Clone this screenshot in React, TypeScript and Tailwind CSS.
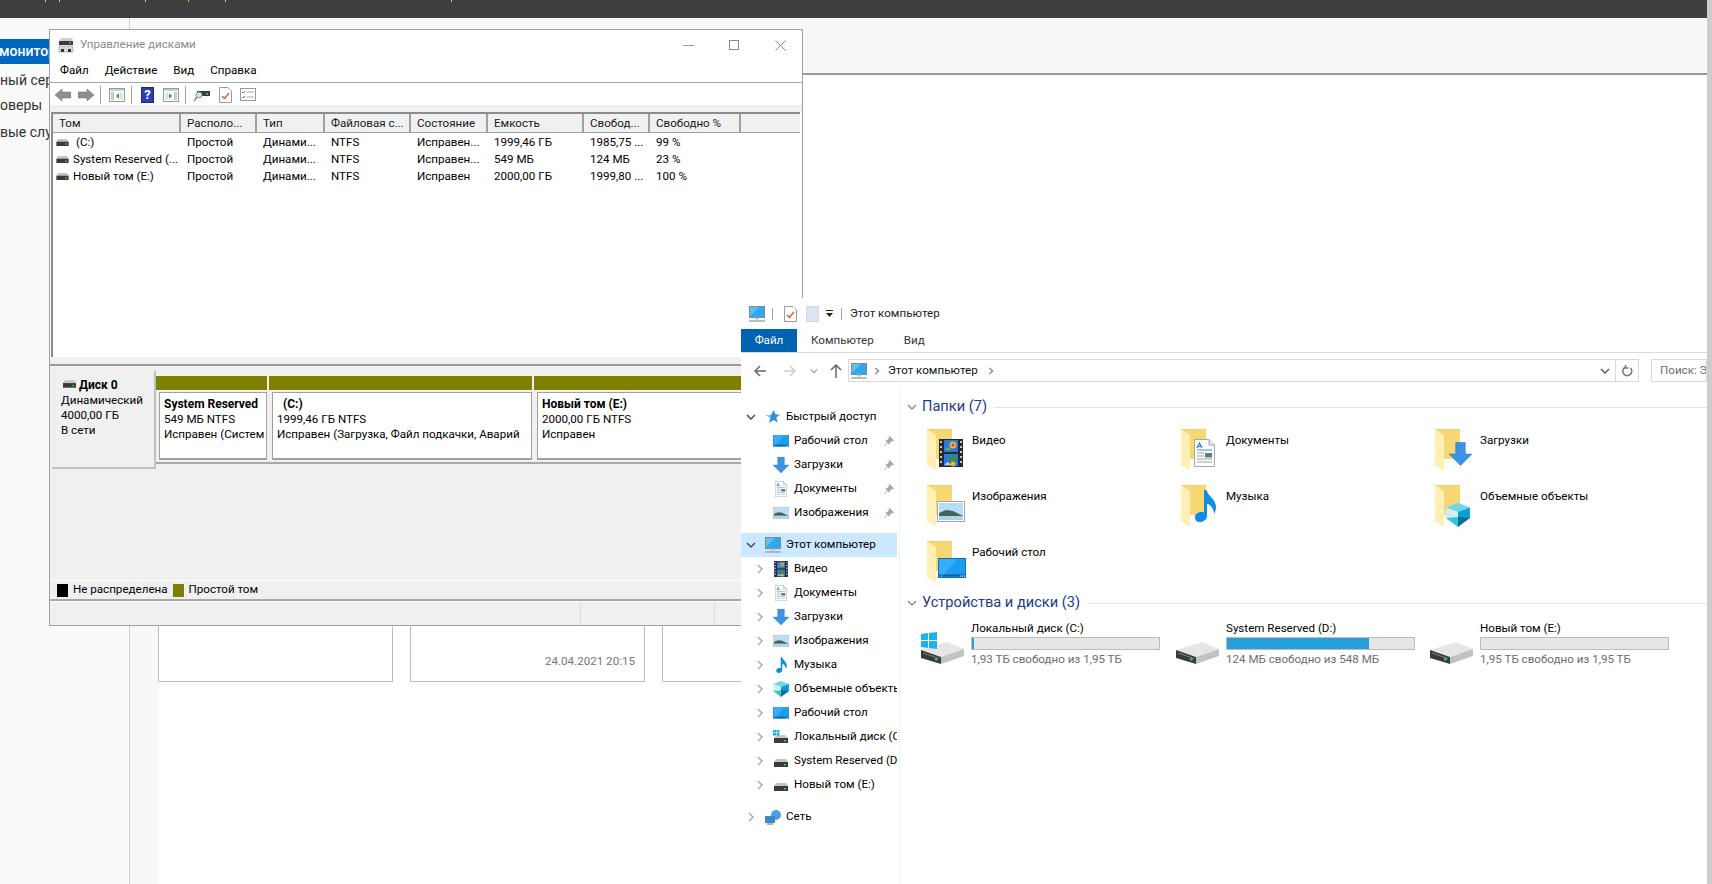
import { ReactNode } from "react";

const Chevron = ({ open, className }: { open?: boolean; className?: string }) => (
  <svg viewBox="0 0 10 10" className={className} fill="none" strokeWidth="1.4">
    {open ? <path d="M1 3l4 4 4-4" /> : <path d="M3 1l4 4-4 4" />}
  </svg>
);

const Pc = ({ className }: { className?: string }) => (
  <svg viewBox="0 0 16 16" className={className}>
    <rect x="0.500" y="0.500" width="15" height="11" fill="#1f9ce8" stroke="#7a8a96" strokeWidth="1" />
    <path d="M1 1h14v9.500H1z" fill="#5cc0f2" />
    <path d="M1 10L10 1h5v9.500H1z" fill="#2ea8ee" />
    <path d="M0 15h16" stroke="#9aa5ad" strokeWidth="1.400" />
    <path d="M6 12.500h4" stroke="#b7bfc5" strokeWidth="2" />
  </svg>
);

const Star = ({ className }: { className?: string }) => (
  <svg viewBox="0 0 14 14" className={className}>
    <path d="M8 0l1.500 4.500H14L10.300 7.500l1.500 5L7.500 10 3 13l1.400-5L0 5h5z" fill="#2f8fe0" />
    <path d="M3 13l1.400-5L0 5h5z" fill="#86c4f2" />
  </svg>
);

const Pin = () => (
  <svg viewBox="0 0 10 10" className="w-[10px] h-[10px] shrink-0 mr-[3px]">
    <path d="M5.500 0L10 4.500 8.800 5.500 7.800 5 5.500 7.500 5.500 9 1 4.500 2.500 4.500 5 2 4.500 1z" fill="#a8a8a8" />
    <path d="M3 7L0.500 9.500" stroke="#a8a8a8" />
  </svg>
);

const DesktopIcon = ({ className }: { className?: string }) => (
  <svg viewBox="0 0 28 20" className={className}>
    <rect x="0.500" y="0.500" width="27" height="19" fill="#1a9cf0" stroke="#1071b5" />
    <path d="M1 1h18L6 17H1z" fill="#35aef5" />
    <path d="M1 17.500h26" stroke="#0a5f9c" strokeWidth="2" />
    <path d="M3 18h1M22 18h1M24 18h1M26 18h1" stroke="#fff" />
  </svg>
);

const DownArrow = ({ className }: { className?: string }) => (
  <svg viewBox="0 0 24 24" className={className}>
    <path d="M7 0h10v12h7L12 24 0 12h7z" fill="#3c93e4" stroke="#2a6fb5" strokeWidth="0.500" />
  </svg>
);

const DocIcon = ({ className }: { className?: string }) => (
  <svg viewBox="0 0 21 28" className={className}>
    <path d="M0.500 0.500H15L20.500 6V27.500H0.500z" fill="#fff" stroke="#a8a8a8" />
    <path d="M15 0.500V6h5.500" fill="#e8e8e8" stroke="#a8a8a8" />
    <path d="M3 9l2.500-5L8 9M4 7.500h3" fill="none" stroke="#2a7fd0" strokeWidth="1.200" />
    <path d="M3 11h15" stroke="#2a9ce0" strokeWidth="1" />
    <path d="M3 14h7M3 17h7M3 20h15M3 23h15" stroke="#9aa0a6" />
    <rect x="11" y="14" width="7" height="4.500" fill="#5d7f8a" />
  </svg>
);

const ImageIcon = ({ className }: { className?: string }) => (
  <svg viewBox="0 0 28 21" className={className}>
    <rect x="0.500" y="0.500" width="27" height="20" fill="#fff" stroke="#a5a5a5" />
    <rect x="2" y="2" width="24" height="17" fill="#b7dcf3" />
    <path d="M2 12l7-3 7 1 10 5v2H2z" fill="#40645c" />
    <rect x="2" y="15" width="24" height="4" fill="#a9d3e6" />
  </svg>
);

const FilmIcon = ({ className }: { className?: string }) => (
  <svg viewBox="0 0 24 28" className={className}>
    <rect width="24" height="28" fill="#26292c" />
    <path d="M1 2h2v2H1zM1 7h2v2H1zM1 12h2v2H1zM1 17h2v2H1zM1 22h2v2H1zM21 2h2v2h-2zM21 7h2v2h-2zM21 12h2v2h-2zM21 17h2v2h-2zM21 22h2v2h-2z" fill="#c8c8c8" />
    <rect x="5" y="1" width="14" height="12" fill="#2a78e0" />
    <rect x="5" y="15" width="14" height="12" fill="#2a78e0" />
    <circle cx="14" cy="6" r="3.500" fill="#e9b53a" />
    <circle cx="14" cy="6" r="1.500" fill="#d8452e" />
    <path d="M6 10l3-2 3 3H6z" fill="#63b04a" />
    <circle cx="14" cy="20" r="3.500" fill="#3a8f3c" />
    <circle cx="14" cy="25" r="2.500" fill="#e9b53a" />
    <path d="M6 25l3-2 3 3H6z" fill="#e9d46a" />
  </svg>
);

const MusicIcon = ({ className }: { className?: string }) => (
  <svg viewBox="0 0 21 32" className={className}>
    <path d="M9 0h2.500c.5 5 9.500 9 9.500 17 0 3-1 5-2 7 0-5-3-9-7-10.500V26c0 3.500-3.500 6-7 6S0 30 0 27s4-6 9-4.500z" fill="#0b8ee8" />
  </svg>
);

const CubeIcon = ({ className }: { className?: string }) => (
  <svg viewBox="0 0 24 24" className={className}>
    <path d="M12 0L0 4.500 12 9l12-4.500z" fill="#6dd6e8" />
    <path d="M0 4.500V15l12 4V9z" fill="#d3eef3" />
    <path d="M24 4.500V15l-12 4V9z" fill="#0a9fd0" />
    <path d="M0 15l12 9V14z" fill="#35c4d8" />
    <path d="M24 15l-12 9V14z" fill="#0a6f90" />
  </svg>
);

const Folder = ({ children }: { children?: ReactNode }) => (
  <div className="relative w-[40px] h-[42px] shrink-0">
    <svg viewBox="0 0 26 42" className="absolute left-0 top-0 w-[26px] h-[42px]">
      <path d="M0 0h25v30H9v11L0 36z" fill="#f8d775" />
      <path d="M0 0l9 6v35l-9-5z" fill="#fff0b5" />
      <path d="M0 0h25v1H0z" fill="#f3cf6b" />
    </svg>
    {children}
  </div>
);

const DriveLarge = ({ win, className }: { win?: boolean; className?: string }) => (
  <svg viewBox="0 0 44 32" className={className}>
    <path d="M0 18L26 10l17 7-23 8z" fill="#e6e6e6" />
    <path d="M20 25l23-8v7l-23 8z" fill="#c2c2c2" />
    <path d="M0 18l20 7v7L0 26z" fill="#3a3a3a" />
    <path d="M2 21l16 5.500" stroke="#808080" strokeWidth="1" />
    <rect x="14" y="26" width="2.500" height="2.500" fill="#35c94a" />
    {win && <path d="M0 2l7-1v7H0zM8 1l8-1v8H8zM0 9h7v7l-7-1zM8 9h8v8l-8-1z" fill="#19b4ee" />}
  </svg>
);

const DriveSmall = ({ win, className }: { win?: boolean; className?: string }) => (
  <svg viewBox="0 0 16 14" className={className}>
    <path d="M1 8l3-3h8l3 3z" fill="#c9c9c9" />
    <rect x="1" y="8" width="14" height="5" fill="#3c3c3c" />
    <rect x="11" y="10" width="2" height="1.500" fill="#39d353" />
    {win && <path d="M0 0h3v2.500H0zM3.500 0h3v2.500h-3zM0 3h3v2.500H0zM3.500 3h3v2.500h-3z" fill="#19b4ee" />}
  </svg>
);

const DiskMiniGray = ({ className }: { className?: string }) => (
  <svg viewBox="0 0 14 8" className={className}>
    <path d="M0 3l2-3h10l2 3z" fill="#c4c4c4" />
    <rect y="3" width="14" height="5" fill="#3a3a3a" />
    <rect x="10" y="5" width="2" height="1.500" fill="#39d353" />
  </svg>
);

// панель инструментов "Управление дисками"
const ToolSep = ({ className }: { className?: string }) => <div className={`w-px h-[18px] bg-[#a0a0a0] ${className ?? ""}`} />;

const PanelIcon = ({ side }: { side: "left" | "right" }) => (
  <svg viewBox="0 0 16 14" className="w-4 h-[14px] shrink-0">
    <rect x="0.500" y="0.500" width="15" height="13" fill="#fff" stroke="#8f9aa3" />
    <path d="M1 1h14v2H1z" fill="#c8d0d6" />
    {side === "left" ? (
      <>
        <path d="M2 5h3M2 7h3M2 9h3M2 11h3" stroke="#7fa06e" />
        <path d="M10 5v6L7 8z" fill="#2fa33a" />
        <path d="M11 5h3v7h-3z" fill="#dfe5ea" />
      </>
    ) : (
      <>
        <path d="M11 5h3M11 7h3M11 9h3M11 11h3" stroke="#8f9aa3" />
        <path d="M6 5v6l3-3z" fill="#2fa33a" />
        <path d="M2 5h3v7H2z" fill="#dfe5ea" />
      </>
    )}
  </svg>
);

const DiskToolbar = () => (
  <div className="h-[22px] pt-px flex items-center pl-[5px] shrink-0">
    <svg viewBox="0 0 16 12" className="w-4 h-3 shrink-0">
      <path d="M7 0v3h9v6H7v3L0 6z" fill="#8f8f8f" stroke="#6f6f6f" strokeWidth="0.500" />
    </svg>
    <svg viewBox="0 0 16 12" className="w-4 h-3 shrink-0 ml-[7px]">
      <path d="M9 0v3H0v6h9v3l7-6z" fill="#8f8f8f" stroke="#6f6f6f" strokeWidth="0.500" />
    </svg>
    <ToolSep className="ml-[6px]" />
    <div className="ml-[8px]">
      <PanelIcon side="left" />
    </div>
    <ToolSep className="ml-[6px]" />
    <div className="ml-[9px] w-[13px] h-[16px] bg-[#2b3fb5] border border-[#1c2a85] text-white text-[13px] leading-[14px] font-bold text-center">?</div>
    <div className="ml-[9px]">
      <PanelIcon side="right" />
    </div>
    <ToolSep className="ml-[6px]" />
    <svg viewBox="0 0 16 14" className="w-4 h-[14px] ml-[8px] shrink-0">
      <path d="M3 3h13v5H3z" fill="#3a3a3a" />
      <rect x="12" y="5" width="2" height="1.500" fill="#39d353" />
      <circle cx="5" cy="7" r="3" fill="#cfe4ef" stroke="#7d8c95" />
      <path d="M3 9l-3 4" stroke="#7d8c95" strokeWidth="1.500" />
    </svg>
    <svg viewBox="0 0 13 16" className="w-[13px] h-4 ml-[9px] shrink-0">
      <path d="M0.500 0.500H9L12.500 4v11.500H0.500z" fill="#fff" stroke="#9a9a9a" />
      <path d="M3 9l2.500 2.500L10 6" fill="none" stroke="#e2572b" strokeWidth="1.400" />
    </svg>
    <svg viewBox="0 0 16 13" className="w-4 h-[13px] ml-[8px] shrink-0">
      <rect x="0.500" y="0.500" width="15" height="12" fill="#fff" stroke="#8f9aa3" />
      <path d="M2 4l1 1 2-2M2 9l1 1 2-2" fill="none" stroke="#2f7fd0" />
      <path d="M7 4h7M7 9h7" stroke="#a3adb5" />
    </svg>
  </div>
);

const listCols = "grid grid-cols-[128px_76px_68px_86px_77px_96px_66px_91px_1fr]";

const heads = ["Том", "Располо...", "Тип", "Файловая с...", "Состояние", "Емкость", "Свобод...", "Свободно %", ""];

const rows = [
  { name: "(C:)", gap: "ml-[7px]", cells: ["Простой", "Динами...", "NTFS", "Исправен...", "1999,46 ГБ", "1985,75 ...", "99 %"] },
  { name: "System Reserved (...", gap: "ml-[4px]", cells: ["Простой", "Динами...", "NTFS", "Исправен...", "549 МБ", "124 МБ", "23 %"] },
  { name: "Новый том (E:)", gap: "ml-[4px]", cells: ["Простой", "Динами...", "NTFS", "Исправен", "2000,00 ГБ", "1999,80 ...", "100 %"] },
];

const VolumeList = () => (
  <div className="h-[245px] ml-px mr-[2px] border-l-2 border-t-2 border-[#8c8c8c] bg-white flex flex-col shrink-0">
    <div className={`${listCols} h-[19px] bg-[#f0f0f0] border-b border-[#a0a0a0]`}>
      {heads.map((h, i) => (
        <div key={i} className="pl-[6px] border-r-2 border-[#a0a0a0] last:border-r-0 leading-[18px] whitespace-nowrap overflow-hidden text-[#1a1a1a]">
          {h}
        </div>
      ))}
    </div>
    <div className="pt-px">
      {rows.map((r) => (
        <div key={r.name} className={`${listCols} h-[17px] leading-[17px]`}>
          <div className="flex items-center pl-[3px] whitespace-nowrap overflow-hidden">
            <DiskMiniGray className="w-[13px] h-[7px] shrink-0" />
            <span className={r.gap}>{r.name}</span>
          </div>
          {r.cells.map((c, i) => (
            <div key={i} className="pl-[6px] whitespace-nowrap">
              {c}
            </div>
          ))}
        </div>
      ))}
    </div>
  </div>
);

const Partition = ({ w, title, size, status, indent }: { w: string; title: string; size: string; status: string; indent?: boolean }) => (
  <div className={`${w} shrink-0 pr-[2px] pt-[5px] h-[93px] border-b-2 border-[#a8a8a8]`}>
    <div className="h-[14px] bg-[#808000]" />
    <div className="mt-[2px] ml-[3px] h-[68px] bg-white border border-[#a0a0a0] border-b-2 pl-[4px] pt-[4px] leading-[15px] whitespace-nowrap overflow-hidden">
      <div className={`font-bold text-[12px] ${indent ? "pl-[6px]" : ""}`}>{title}</div>
      <div>{size}</div>
      <div>{status}</div>
    </div>
  </div>
);

const DiskWindow = () => (
  <div className="absolute left-[49px] top-[29px] w-[754px] h-[597px] bg-white border border-[#a0a0a0] flex flex-col">
    <div className="h-[30px] flex items-center pl-[8px] shrink-0">
      <svg viewBox="0 0 16 16" className="w-4 h-4 shrink-0">
        <path d="M3 1h12l-2 4H1z" fill="#cfcfcf" />
        <rect x="1" y="4" width="14" height="4" fill="#3a3a3a" />
        <rect x="11" y="5" width="2" height="1.500" fill="#39d353" />
        <rect x="1" y="9" width="14" height="6" fill="#d8d8d8" stroke="#8c8c8c" strokeWidth="0.500" />
        <rect x="3" y="12" width="3" height="3" fill="#333" />
        <rect x="10" y="12" width="3" height="3" fill="#333" />
      </svg>
      <span className="ml-[6px] text-[#8a8a8a]">Управление дисками</span>
      <div className="ml-auto flex items-center text-[#8a8a8a]">
        <div className="w-[11px] h-px bg-[#9a9a9a] mr-[35px]" />
        <div className="w-[10px] h-[10px] border border-[#8a8a8a] mr-[36px]" />
        <svg viewBox="0 0 11 11" className="w-[11px] h-[11px] mr-[16px]">
          <path d="M0.500 0.500l10 10M10.500 0.500l-10 10" stroke="#8a8a8a" />
        </svg>
      </div>
    </div>
    <div className="h-[23px] flex items-center border-b border-[#a8a8a8] pl-[10px] gap-[16px] shrink-0">
      <span>Файл</span>
      <span>Действие</span>
      <span>Вид</span>
      <span>Справка</span>
    </div>
    <DiskToolbar />
    <div className="h-[7px] bg-[#f0f0f0] shrink-0" />
    <VolumeList />
    <div className="h-[7px] bg-[#f0f0f0] shrink-0" />
    <div className="h-[2px] bg-[#9a9a9a] shrink-0" />
    <div className="flex-1 bg-[#f0f0f0] flex flex-col min-h-0">
      <div className="flex-1 pt-[5px] pl-[2px]">
        <div className="flex">
          <div className="w-[104px] h-[98px] bg-[#f0f0f0] border-r-2 border-b-2 border-[#c0c0c0] pl-[9px] pt-[7px] leading-[15px] shrink-0">
            <div className="flex items-center h-[15px] font-bold text-[12px]">
              <DiskMiniGray className="w-[13px] h-[8px] ml-[2px] mr-[3px] -mt-[3px]" />
              Диск 0
            </div>
            <div>Динамический</div>
            <div>4000,00 ГБ</div>
            <div>В сети</div>
          </div>
          <Partition w="w-[113px]" title="System Reserved" size="549 МБ NTFS" status="Исправен (Систем" />
          <Partition w="w-[265px]" title="(C:)" size="1999,46 ГБ NTFS" status="Исправен (Загрузка, Файл подкачки, Аварий" indent />
          <Partition w="w-[264px]" title="Новый том  (E:)" size="2000,00 ГБ NTFS" status="Исправен" />
        </div>
      </div>
      <div className="h-[19px] border-t border-white flex items-center pl-[7px] shrink-0">
        <div className="w-[11px] h-[13px] bg-black" />
        <span className="ml-[5px]">Не распределена</span>
        <div className="ml-[5px] w-[11px] h-[13px] bg-[#808000]" />
        <span className="ml-[5px]">Простой том</span>
      </div>
    </div>
    <div className="h-[2px] bg-[#a8a8a8] shrink-0" />
    <div className="h-[24px] bg-[#f0f0f0] border-t border-white flex shrink-0">
      <div className="w-[531px] border-r border-[#dcdcdc]" />
      <div className="w-[134px] border-r border-[#dcdcdc]" />
    </div>
  </div>
);

const NavRow = ({ level, icon, label, pin, chev, open, active }: { level: 1 | 2; icon: ReactNode; label: string; pin?: boolean; chev?: boolean; open?: boolean; active?: boolean }) => (
  <div className={`h-6 flex items-center w-[156px] ${active ? "bg-[#cce8ff]" : ""}`}>
    <div className={`${level === 1 ? "w-[24px] pl-[5px]" : "w-[32px] pl-[14px]"} shrink-0`}>
      {chev && <Chevron open={open} className={`w-[10px] h-[10px] ${open ? "stroke-[#444]" : "stroke-[#a6a6a6]"}`} />}
    </div>
    <div className="w-[16px] h-[16px] shrink-0 flex items-center justify-center">{icon}</div>
    <span className="ml-[5px] flex-1 overflow-hidden whitespace-nowrap">{label}</span>
    {pin && <Pin />}
  </div>
);

const NavPane = () => (
  <div className="w-[159px] border-r border-[#f0f0f0] pt-[18px] shrink-0 flex flex-col">
    <NavRow level={1} chev open icon={<Star className="w-[14px] h-[14px]" />} label="Быстрый доступ" />
    <NavRow level={2} pin icon={<DesktopIcon className="w-4 h-3" />} label="Рабочий стол" />
    <NavRow level={2} pin icon={<DownArrow className="w-4 h-4" />} label="Загрузки" />
    <NavRow level={2} pin icon={<DocIcon className="w-3 h-4" />} label="Документы" />
    <NavRow level={2} pin icon={<ImageIcon className="w-4 h-3" />} label="Изображения" />
    <div className="h-2" />
    <NavRow level={1} chev open active icon={<Pc className="w-4 h-4" />} label="Этот компьютер" />
    <NavRow level={2} chev icon={<FilmIcon className="w-[14px] h-4" />} label="Видео" />
    <NavRow level={2} chev icon={<DocIcon className="w-3 h-4" />} label="Документы" />
    <NavRow level={2} chev icon={<DownArrow className="w-4 h-4" />} label="Загрузки" />
    <NavRow level={2} chev icon={<ImageIcon className="w-4 h-3" />} label="Изображения" />
    <NavRow level={2} chev icon={<MusicIcon className="w-[11px] h-4" />} label="Музыка" />
    <NavRow level={2} chev icon={<CubeIcon className="w-4 h-4" />} label="Объемные объекты" />
    <NavRow level={2} chev icon={<DesktopIcon className="w-4 h-3" />} label="Рабочий стол" />
    <NavRow level={2} chev icon={<DriveSmall win className="w-4 h-[14px]" />} label="Локальный диск (C:)" />
    <NavRow level={2} chev icon={<DiskMiniGray className="w-[14px] h-2 mt-1" />} label="System Reserved (D:)" />
    <NavRow level={2} chev icon={<DiskMiniGray className="w-[14px] h-2 mt-1" />} label="Новый том (E:)" />
    <div className="h-2" />
    <NavRow
      level={1}
      chev
      icon={
        <svg viewBox="0 0 16 16" className="w-4 h-4">
          <circle cx="11" cy="6" r="5" fill="#4aa3e0" />
          <rect x="0.500" y="7.500" width="9" height="6" fill="#2a8ee0" stroke="#6a7f90" />
          <path d="M2 15h6" stroke="#8a97a3" strokeWidth="1.500" />
        </svg>
      }
      label="Сеть"
    />
  </div>
);

const SectionHead = ({ title }: { title: string }) => (
  <div className="h-5 flex items-center pl-[7px] shrink-0">
    <Chevron open className="w-[10px] h-[10px] stroke-[#8a8a8a]" />
    <span className="ml-[5px] text-[14.6px] text-[#1e3a8a] whitespace-nowrap">{title}</span>
    <div className="flex-1 h-px bg-[#e2e2e2] ml-[7px]" />
  </div>
);

const folders: { label: string; overlay: ReactNode }[] = [
  { label: "Видео", overlay: <FilmIcon className="absolute left-[12px] top-[10px] w-[24px] h-[28px]" /> },
  { label: "Документы", overlay: <DocIcon className="absolute left-[13px] top-[10px] w-[21px] h-[28px]" /> },
  { label: "Загрузки", overlay: <DownArrow className="absolute left-[14px] top-[13px] w-[23px] h-[24px]" /> },
  { label: "Изображения", overlay: <ImageIcon className="absolute left-[10px] top-[16px] w-[28px] h-[21px]" /> },
  { label: "Музыка", overlay: <MusicIcon className="absolute left-[14px] top-[5px] w-[21px] h-[32px]" /> },
  { label: "Объемные объекты", overlay: <CubeIcon className="absolute left-[11px] top-[18px] w-[24px] h-[24px]" /> },
  { label: "Рабочий стол", overlay: <DesktopIcon className="absolute left-[11px] top-[17px] w-[28px] h-[20px]" /> },
];

const drives = [
  { name: "Локальный диск (C:)", free: "1,93 ТБ свободно из 1,95 ТБ", pct: 1, win: true },
  { name: "System Reserved (D:)", free: "124 МБ свободно из 548 МБ", pct: 76, win: false },
  { name: "Новый том (E:)", free: "1,95 ТБ свободно из 1,95 ТБ", pct: 0, win: false },
];

const ContentPane = () => (
  <div className="flex-1 pt-[10px] flex flex-col min-w-0">
    <SectionHead title="Папки (7)" />
    <div className="mt-[12px] h-[164px] pl-[27px] grid grid-cols-[254px_254px_254px] auto-rows-[56px]">
      {folders.map((f) => (
        <div key={f.label} className="flex">
          <Folder>{f.overlay}</Folder>
          <span className="ml-[5px] mt-[3px] leading-4 whitespace-nowrap">{f.label}</span>
        </div>
      ))}
    </div>
    <SectionHead title="Устройства и диски (3)" />
    <div className="mt-[7px] pl-[21px] grid grid-cols-[255px_254px_254px]">
      {drives.map((d) => (
        <div key={d.name} className="flex">
          <div className="w-[50px] shrink-0 pt-[12px]">
            <DriveLarge win={d.win} className="w-[44px] h-[32px]" />
          </div>
          <div className="w-[189px]">
            <div className="leading-4 h-[17px] whitespace-nowrap">{d.name}</div>
            <div className="h-[13px] bg-[#e6e6e6] border border-[#bcbcbc]">
              <div className="h-full bg-[#26a0da]" style={{ width: `${d.pct}%` }} />
            </div>
            <div className="mt-px leading-4 text-[#6d6d6d] whitespace-nowrap">{d.free}</div>
          </div>
        </div>
      ))}
    </div>
  </div>
);

const Explorer = () => (
  <div className="absolute left-[741px] top-[298px] w-[966px] bottom-0 bg-white flex flex-col">
    <div className="h-[31px] flex items-center pl-[8px] shrink-0">
      <Pc className="w-4 h-4" />
      <div className="ml-[7px] w-px h-[12px] bg-[#a0a0a0]" />
      <svg viewBox="0 0 13 16" className="w-[13px] h-4 ml-[11px] shrink-0">
        <path d="M0.500 0.500H9L12.500 4v11.500H0.500z" fill="#fff" stroke="#9a9a9a" />
        <path d="M3 9l2.500 2.500L10 6" fill="none" stroke="#e2572b" strokeWidth="1.400" />
      </svg>
      <div className="ml-[9px] w-[13px] h-[16px] bg-[#dbe4f3] border border-[#cdd8ea]" />
      <svg viewBox="0 0 7 7" className="w-[7px] h-[7px] ml-[7px] shrink-0">
        <path d="M0 0h7v1H0z" fill="#222" />
        <path d="M0 3h7L3.500 7z" fill="#222" />
      </svg>
      <div className="ml-[8px] w-px h-[12px] bg-[#a0a0a0]" />
      <span className="ml-[8px] text-[#222]">Этот компьютер</span>
    </div>
    <div className="h-[24px] flex items-stretch border-b border-[#dadbdc] shrink-0">
      <div className="w-[56px] h-[23px] bg-[#0063b1] text-white flex items-center justify-center">Файл</div>
      <div className="ml-[14px] flex items-center text-[#333]">Компьютер</div>
      <div className="ml-[30px] flex items-center text-[#333]">Вид</div>
    </div>
    <div className="h-[34px] pt-[6px] flex items-start pl-[13px] shrink-0">
      <div className="h-[23px] flex items-center">
        <svg viewBox="0 0 12 12" className="w-3 h-3" fill="none" stroke="#666" strokeWidth="1.500">
          <path d="M12 6H1M6 1L1 6l5 5" />
        </svg>
        <svg viewBox="0 0 12 12" className="w-3 h-3 ml-[18px]" fill="none" stroke="#cfcfcf" strokeWidth="1.500">
          <path d="M0 6h11M6 1l5 5-5 5" />
        </svg>
        <Chevron open className="w-[8px] h-[8px] ml-[14px] stroke-[#999]" />
        <svg viewBox="0 0 12 14" className="w-3 h-[14px] ml-[12px]" fill="none" stroke="#666" strokeWidth="1.500">
          <path d="M6 14V1M1 6l5-5 5 5" />
        </svg>
      </div>
      <div className="ml-[6px] w-[791px] h-[23px] border border-[#d9d9d9] flex items-center pl-[2px]">
        <Pc className="w-4 h-4" />
        <Chevron className="w-[8px] h-[8px] ml-[6px] stroke-[#777]" />
        <span className="ml-[7px] text-[#111]">Этот компьютер</span>
        <Chevron className="w-[8px] h-[8px] ml-[9px] stroke-[#777]" />
        <Chevron open className="w-[10px] h-[10px] ml-auto mr-[3px] stroke-[#555]" />
        <div className="w-px h-full bg-[#d9d9d9] ml-[2px]" />
        <svg viewBox="0 0 12 12" className="w-3 h-3 mx-[5px]" fill="none" stroke="#777" strokeWidth="1.500">
          <path d="M9.500 3a4.500 4.500 0 11-5-1M4.500 0v3h3" />
        </svg>
      </div>
      <div className="ml-[12px] flex-1 h-[23px] border border-[#d9d9d9] pl-[8px] leading-[21px] text-[#6d6d6d] overflow-hidden whitespace-nowrap">Поиск: Э</div>
    </div>
    <div className="flex-1 flex min-h-0">
      <NavPane />
      <ContentPane />
    </div>
  </div>
);

const specks = ["ml-[45px] bg-[#9fd4f5]", "ml-[13px] bg-[#9fd4f5]", "ml-[85px] bg-[#9fd4f5]", "ml-[42px] bg-[#f2a65a]", "ml-[36px] bg-[#e8c98a]", "ml-[225px] bg-[#9fd4f5]"];

export default function App() {
  return (
    <div className="relative w-[1712px] h-[884px] overflow-hidden bg-white text-black text-[11.6px] font-['Roboto',sans-serif]">
      <div className="flex h-full">
        <div className="flex-1 flex flex-col min-w-0">
          <div className="h-[18px] bg-[#3f3f3f] flex items-start shrink-0">
            {specks.map((s) => (
              <div key={s} className={`w-px h-[2px] ${s}`} />
            ))}
          </div>
          <div className="flex-1 flex min-h-0">
            <div className="w-[130px] bg-[#fafafa] border-r border-[#d0d0d0] pt-[21px] text-[14px] text-[#333] overflow-hidden whitespace-nowrap shrink-0">
              <div className="h-[25px] bg-[#0067c0] text-white leading-[25px] font-medium">
                <span className="-ml-[12px]">а монитор</span>
              </div>
              <div className="h-[28px] leading-[32px]">ный сервер</div>
              <div className="h-[27px] leading-[27px]">оверы</div>
              <div className="h-[26px] leading-[26px]">вые службы</div>
            </div>
            <div className="flex-1 flex flex-col min-w-0">
              <div className="h-[57px] bg-[#f8f8f8] border-b-2 border-[#999] shrink-0" />
              <div className="flex-1 flex">
                <div className="w-[28px] bg-[#f8f8f8] shrink-0" />
                <div className="flex gap-[17px] items-start pt-[400px]">
                  <div className="w-[235px] h-[207px] border border-[#bdbdbd]" />
                  <div className="w-[235px] h-[207px] border border-[#bdbdbd] flex items-end justify-end pb-[11px] pr-[9px] text-[#777]">24.04.2021 20:15</div>
                  <div className="w-[235px] h-[207px] border border-[#bdbdbd]" />
                </div>
              </div>
            </div>
          </div>
        </div>
        <div className="w-[5px] bg-[#cdcdcd] shrink-0" />
      </div>
      <DiskWindow />
      <Explorer />
    </div>
  );
}
